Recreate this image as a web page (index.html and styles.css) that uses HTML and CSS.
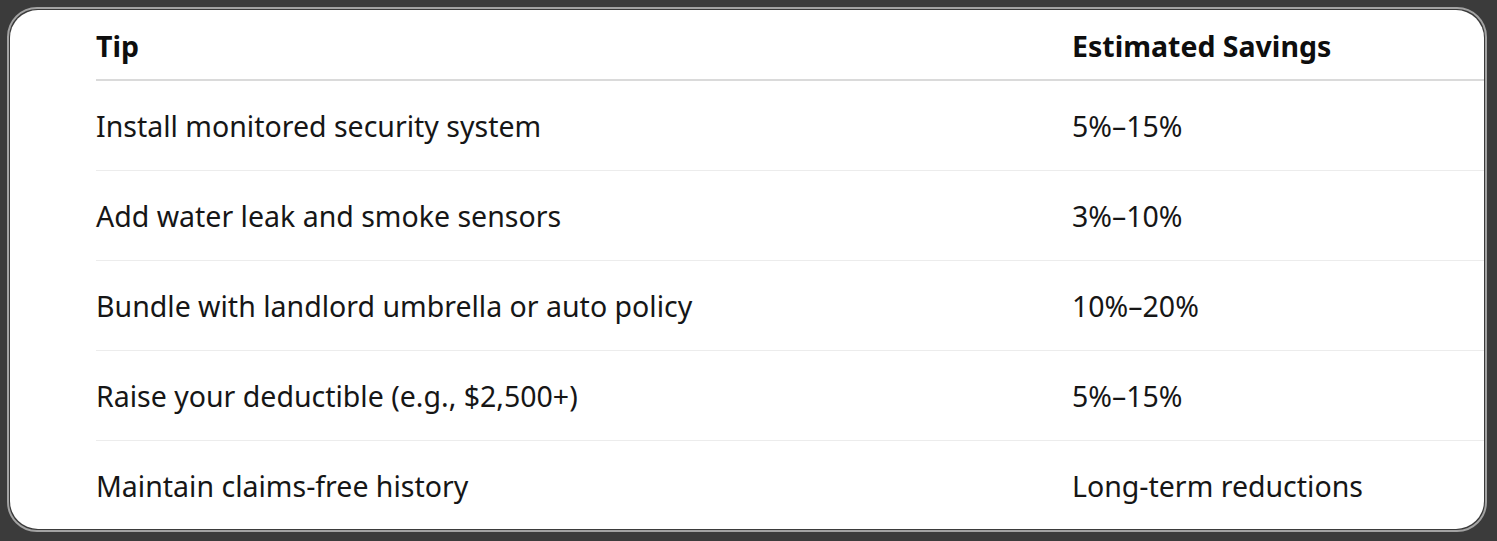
FILE: index.html
```html
<!DOCTYPE html>
<html lang="en">
<head>
<meta charset="utf-8">
<title>Savings Tips</title>
<link rel="stylesheet" href="styles.css">
</head>
<body>
<div class="frame">
  <div class="card">
    <table class="tips">
      <thead>
        <tr><th class="col-tip">Tip</th><th>Estimated Savings</th></tr>
      </thead>
      <tbody>
        <tr><td>Install monitored security system</td><td>5%–15%</td></tr>
        <tr><td>Add water leak and smoke sensors</td><td>3%–10%</td></tr>
        <tr><td>Bundle with landlord umbrella or auto policy</td><td>10%–20%</td></tr>
        <tr><td>Raise your deductible (e.g., $2,500+)</td><td>5%–15%</td></tr>
        <tr><td>Maintain claims-free history</td><td>Long-term reductions</td></tr>
      </tbody>
    </table>
  </div>
</div>
</body>
</html>
```
FILE: styles.css
```css
html, body {
  margin: 0;
  padding: 0;
  background: #3b3b3b;
}
body {
  padding: 7px 0 0 7px;
  font-family: "Noto Sans", "Open Sans", sans-serif;
  color: #161616;
}
.frame {
  width: 1474px;
  height: 519px;
  border: 2px solid #a3a3a3;
  border-radius: 30px;
  padding: 1px;
  background: #3b3b3b;
}
.card {
  height: 100%;
  background: #ffffff;
  border-radius: 28px;
  overflow: hidden;
  padding-left: 86px;
  box-sizing: border-box;
}
.tips {
  width: 100%;
  border-collapse: separate;
  border-spacing: 0;
  font-size: 28.5px;
  text-align: left;
}
.tips th {
  height: 67px;
  padding: 2px 0 0 0;
  font-weight: 700;
  color: #0e0e0e;
  border-bottom: 2px solid #dadada;
  vertical-align: middle;
}
.tips .col-tip {
  width: 976px;
}
.tips td {
  height: 89px;
  padding: 0;
  border-bottom: 1px solid #ececec;
  vertical-align: middle;
}
```
